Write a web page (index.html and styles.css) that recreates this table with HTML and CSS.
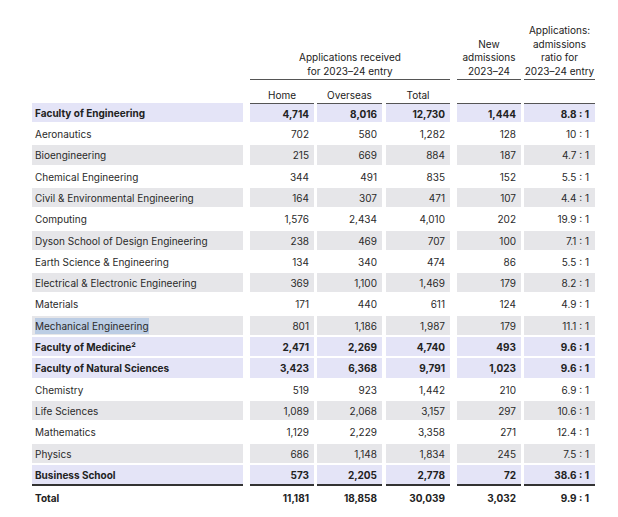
FILE: index.html
```html
<!DOCTYPE html>
<html>
<head>
<meta charset="utf-8">
<link rel="stylesheet" href="styles.css">
</head>
<body>
<div class="tbl">
  <div class="head1">
    <div class="hlabel"></div>
    <div class="hgroup">Applications received<br>for 2023–24 entry</div>
    <div class="hnew">New<br>admissions<br>2023–24</div>
    <div class="hratio">Applications:<br>admissions<br>ratio for<br>2023–24 entry</div>
  </div>
  <div class="head2">
    <div class="hlabel"></div>
    <div class="c home">Home</div>
    <div class="c over">Overseas</div>
    <div class="c tot">Total</div>
  </div>

  <div class="row fac first"><div class="lab">Faculty of Engineering</div><div class="c home">4,714</div><div class="c over">8,016</div><div class="c tot">12,730</div><div class="c new">1,444</div><div class="c ratio">8.8 : 1</div></div>
  <div class="row"><div class="lab">Aeronautics</div><div class="c home">702</div><div class="c over">580</div><div class="c tot">1,282</div><div class="c new">128</div><div class="c ratio">10 : 1</div></div>
  <div class="row alt"><div class="lab">Bioengineering</div><div class="c home">215</div><div class="c over">669</div><div class="c tot">884</div><div class="c new">187</div><div class="c ratio">4.7 : 1</div></div>
  <div class="row"><div class="lab">Chemical Engineering</div><div class="c home">344</div><div class="c over">491</div><div class="c tot">835</div><div class="c new">152</div><div class="c ratio">5.5 : 1</div></div>
  <div class="row alt"><div class="lab">Civil &amp; Environmental Engineering</div><div class="c home">164</div><div class="c over">307</div><div class="c tot">471</div><div class="c new">107</div><div class="c ratio">4.4 : 1</div></div>
  <div class="row"><div class="lab">Computing</div><div class="c home">1,576</div><div class="c over">2,434</div><div class="c tot">4,010</div><div class="c new">202</div><div class="c ratio">19.9 : 1</div></div>
  <div class="row alt"><div class="lab">Dyson School of Design Engineering</div><div class="c home">238</div><div class="c over">469</div><div class="c tot">707</div><div class="c new">100</div><div class="c ratio">7.1 : 1</div></div>
  <div class="row"><div class="lab">Earth Science &amp; Engineering</div><div class="c home">134</div><div class="c over">340</div><div class="c tot">474</div><div class="c new">86</div><div class="c ratio">5.5 : 1</div></div>
  <div class="row alt"><div class="lab">Electrical &amp; Electronic Engineering</div><div class="c home">369</div><div class="c over">1,100</div><div class="c tot">1,469</div><div class="c new">179</div><div class="c ratio">8.2 : 1</div></div>
  <div class="row"><div class="lab">Materials</div><div class="c home">171</div><div class="c over">440</div><div class="c tot">611</div><div class="c new">124</div><div class="c ratio">4.9 : 1</div></div>
  <div class="row alt"><div class="lab"><span class="sel">Mechanical Engineering</span></div><div class="c home">801</div><div class="c over">1,186</div><div class="c tot">1,987</div><div class="c new">179</div><div class="c ratio">11.1 : 1</div></div>
  <div class="row fac"><div class="lab">Faculty of Medicine²</div><div class="c home">2,471</div><div class="c over">2,269</div><div class="c tot">4,740</div><div class="c new">493</div><div class="c ratio">9.6 : 1</div></div>
  <div class="row fac"><div class="lab">Faculty of Natural Sciences</div><div class="c home">3,423</div><div class="c over">6,368</div><div class="c tot">9,791</div><div class="c new">1,023</div><div class="c ratio">9.6 : 1</div></div>
  <div class="row"><div class="lab">Chemistry</div><div class="c home">519</div><div class="c over">923</div><div class="c tot">1,442</div><div class="c new">210</div><div class="c ratio">6.9 : 1</div></div>
  <div class="row alt"><div class="lab">Life Sciences</div><div class="c home">1,089</div><div class="c over">2,068</div><div class="c tot">3,157</div><div class="c new">297</div><div class="c ratio">10.6 : 1</div></div>
  <div class="row"><div class="lab">Mathematics</div><div class="c home">1,129</div><div class="c over">2,229</div><div class="c tot">3,358</div><div class="c new">271</div><div class="c ratio">12.4 : 1</div></div>
  <div class="row alt"><div class="lab">Physics</div><div class="c home">686</div><div class="c over">1,148</div><div class="c tot">1,834</div><div class="c new">245</div><div class="c ratio">7.5 : 1</div></div>
  <div class="row fac last"><div class="lab">Business School</div><div class="c home">573</div><div class="c over">2,205</div><div class="c tot">2,778</div><div class="c new">72</div><div class="c ratio">38.6 : 1</div></div>
  <div class="row total"><div class="lab">Total</div><div class="c home">11,181</div><div class="c over">18,858</div><div class="c tot">30,039</div><div class="c new">3,032</div><div class="c ratio">9.9 : 1</div></div>
</div>
</body>
</html>
```

FILE: styles.css
```css
* { box-sizing: border-box; }
body {
  margin: 0;
  background: #fff;
  font-family: Inter, Roboto, "Liberation Sans", sans-serif;
  font-size: 10px;
  color: #2a2a2a;
}
.tbl {
  width: 595px;
  padding: 24px 0 0 32px;
}
.head1, .head2, .row { display: flex; }
.head1 { align-items: flex-end; line-height: 13.7px; color: #222; }
.hlabel { width: 211px; flex: none; }
.hgroup { width: 200px; margin-left: 7px; text-align: center; border-bottom: 1px solid #555; }
.hnew { width: 64px; margin-left: 7px; text-align: center; border-bottom: 1px solid #555; }
.hratio { width: 71px; margin-left: 3px; text-align: center; border-bottom: 1px solid #555; }
.head2 { height: 23px; align-items: flex-end; line-height: 14px; padding-bottom: 1px; color: #222; }
.head2 .c { text-align: center; padding: 0; }

.row { margin-top: 2px; height: 19.3px; line-height: 19.3px; }
.row.first { margin-top: 0; }
.row > div { padding-top: 1px; }
.lab { width: 211px; flex: none; padding-left: 3px; white-space: nowrap; }
.c { flex: none; text-align: right; padding-right: 5px; white-space: nowrap; }
.home { width: 64px; margin-left: 7px; }
.over { width: 65px; margin-left: 3px; }
.tot { width: 64px; margin-left: 4px; }
.new { width: 64px; margin-left: 7px; }
.ratio { width: 71px; margin-left: 3px; padding-right: 6px; }

.alt > div { background: #e6e6e9; }
.fac > div { background: #e4e4f7; font-weight: 700; color: #222; }
.first .c { border-top: 1px solid #555; line-height: 18.3px; }
.row.last { height: 21.3px; }
.last > div { border-bottom: 2px solid #333; line-height: 19.3px; }
.total > div { font-weight: 700; color: #222; }
.sel { background: #bccde4; padding: 2px 0; }
```
